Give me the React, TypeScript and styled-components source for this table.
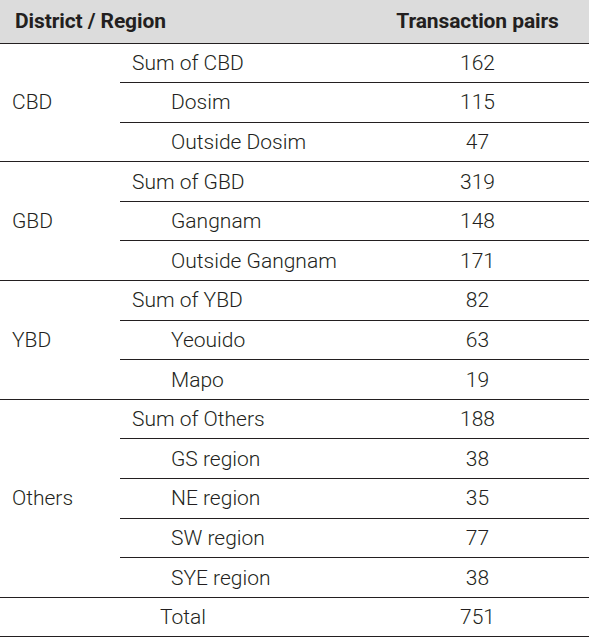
import styled, { createGlobalStyle } from "styled-components";

interface IDistrict {
    name: string;
    sum: number;
    parts: { title: string; value: number }[];
}

const districts: IDistrict[] = [
    {
        name: "CBD",
        sum: 162,
        parts: [
            { title: "Dosim", value: 115 },
            { title: "Outside Dosim", value: 47 }
        ]
    },
    {
        name: "GBD",
        sum: 319,
        parts: [
            { title: "Gangnam", value: 148 },
            { title: "Outside Gangnam", value: 171 }
        ]
    },
    {
        name: "YBD",
        sum: 82,
        parts: [
            { title: "Yeouido", value: 63 },
            { title: "Mapo", value: 19 }
        ]
    },
    {
        name: "Others",
        sum: 188,
        parts: [
            { title: "GS region", value: 38 },
            { title: "NE region", value: 35 },
            { title: "SW region", value: 77 },
            { title: "SYE region", value: 38 }
        ]
    }
]

export default function App() {
    return (
        <>
            <GlobalStyle />
            <Table>
                <colgroup>
                    <col style={{ width: 120 }} />
                    <col style={{ width: 246 }} />
                    <col />
                </colgroup>
                <thead>
                    <HeadRow>
                        <HeadCell colSpan={2}>District / Region</HeadCell>
                        <HeadCell $center>Transaction pairs</HeadCell>
                    </HeadRow>
                </thead>
                <tbody>
                    {
                        districts.map(({ name, sum, parts }) => [
                            <Row key={name}>
                                <DistrictCell rowSpan={parts.length + 1}>{name}</DistrictCell>
                                <LabelCell $level={1}>Sum of {name}</LabelCell>
                                <ValueCell>{sum}</ValueCell>
                            </Row>,
                            ...parts.map(({ title, value }) => (
                                <Row key={name + title}>
                                    <LabelCell $level={2}>{title}</LabelCell>
                                    <ValueCell>{value}</ValueCell>
                                </Row>
                            ))
                        ])
                    }
                    <Row $last>
                        <TotalCell colSpan={2}>Total</TotalCell>
                        <ValueCell>751</ValueCell>
                    </Row>
                </tbody>
            </Table>
        </>
    )
}

const GlobalStyle = createGlobalStyle`
body {
    margin: 0;
    background: #fff;
    font-family: Roboto, "Liberation Sans", sans-serif;
    color: #231f20;
}
`;

const Table = styled('table')`
width: 589px;
border-collapse: collapse;
table-layout: fixed;
font-size: 21px;
font-weight: 300;
`;

const HeadRow = styled('tr')`
height: 43px;
background-color: #dcdcdc;
`;

const HeadCell = styled('th')<{ $center?: boolean }>`
padding: 0;
font-weight: 700;
font-size: 21px;
letter-spacing: -0.1px;
text-align: ${props => props.$center ? 'center' : 'left'};
padding-left: ${props => props.$center ? '0' : '15px'};
`;

const Row = styled('tr')<{ $last?: boolean }>`
height: 39.6px;
border-bottom: ${props => props.$last ? '1px solid #231f20' : 'none'};

& > td {
    border-top: 1px solid #231f20;
}
`;

const DistrictCell = styled('td')`
padding: 0 0 0 12px;
`;

const LabelCell = styled('td')<{ $level: number }>`
padding: 0 0 0 ${props => props.$level === 1 ? '12px' : '51px'};
white-space: nowrap;
`;

const ValueCell = styled('td')`
padding: 0;
text-align: center;
`;

const TotalCell = styled('td')`
padding: 0;
text-align: center;
`;
